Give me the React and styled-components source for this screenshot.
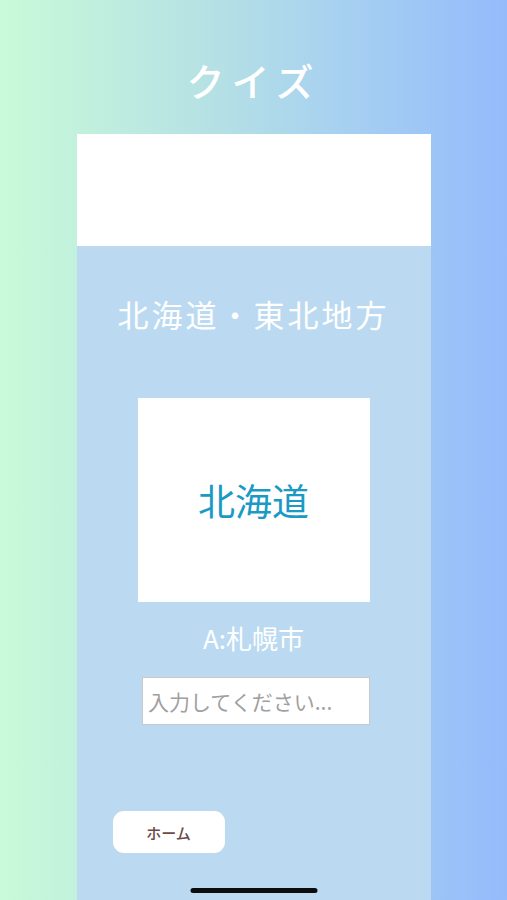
import React from "react";
import styled, { createGlobalStyle } from "styled-components";

const Global = createGlobalStyle`
  html, body { margin: 0; padding: 0; }
  body {
    font-family: "Noto Sans CJK JP", "Noto Sans", sans-serif;
    background: linear-gradient(90deg, #c9fad8 0%, #b6e2e4 40%, #a8d2ef 65%, #95bbfc 100%);
    min-height: 900px;
  }
`;

const Page = styled.div`
  position: relative;
  height: 900px;
  overflow: hidden;
  display: flex;
  flex-direction: column;
  align-items: center;
`;

const Title = styled.h1`
  margin: 0;
  height: 134px;
  box-sizing: border-box;
  padding-top: 52px;
  display: flex;
  justify-content: center;
  align-items: flex-start;
  font-size: 38px;
  line-height: 56px;
  font-weight: 500;
  letter-spacing: 7px;
  color: #ffffff;
`;

const Panel = styled.main`
  width: 354px;
  flex: 1;
  background: #bbdaf1;
  display: flex;
  flex-direction: column;
  align-items: center;
`;

const Banner = styled.div`
  align-self: stretch;
  height: 112px;
  background: #ffffff;
`;

const Region = styled.h2`
  margin: 48px 0 0;
  font-size: 31px;
  line-height: 40px;
  font-weight: 400;
  color: #ffffff;
  letter-spacing: 3px;
`;

const Card = styled.div`
  margin-top: 64px;
  width: 232px;
  height: 204px;
  background: #ffffff;
  display: flex;
  align-items: center;
  justify-content: center;
  font-size: 37px;
  color: #1b9ac6;
`;

const Answer = styled.p`
  margin: 18px 0 0;
  font-size: 26px;
  line-height: 36px;
  color: #ffffff;
`;

const Input = styled.input`
  margin-top: 21px;
  margin-left: 5px;
  width: 228px;
  height: 48px;
  box-sizing: border-box;
  border: 1px solid #c9c9c9;
  background: #ffffff;
  padding: 0 5px;
  font-size: 21px;
  font-family: "Noto Sans CJK JP", sans-serif;
  outline: none;
  &::placeholder { color: #a0a0a0; }
`;

const Footer = styled.div`
  align-self: stretch;
  padding: 86px 0 0 36px;
`;

const HomeButton = styled.button`
  width: 112px;
  height: 42px;
  border: none;
  border-radius: 11px;
  background: #ffffff;
  color: #6b4a4a;
  font-size: 15px;
  font-weight: 500;
  font-family: "Noto Sans CJK JP", sans-serif;
`;

const HomeIndicator = styled.div`
  position: absolute;
  left: 50%;
  bottom: 7px;
  transform: translateX(-50%);
  width: 127px;
  height: 5px;
  border-radius: 3px;
  background: #0c0c0c;
`;

export default function App() {
  return (
    <>
      <Global />
      <Page>
        <Title>クイズ</Title>
        <Panel>
          <Banner />
          <Region>北海道・東北地方</Region>
          <Card>北海道</Card>
          <Answer>A:札幌市</Answer>
          <Input placeholder="入力してください..." />
          <Footer>
            <HomeButton>ホーム</HomeButton>
          </Footer>
        </Panel>
        <HomeIndicator />
      </Page>
    </>
  );
}
